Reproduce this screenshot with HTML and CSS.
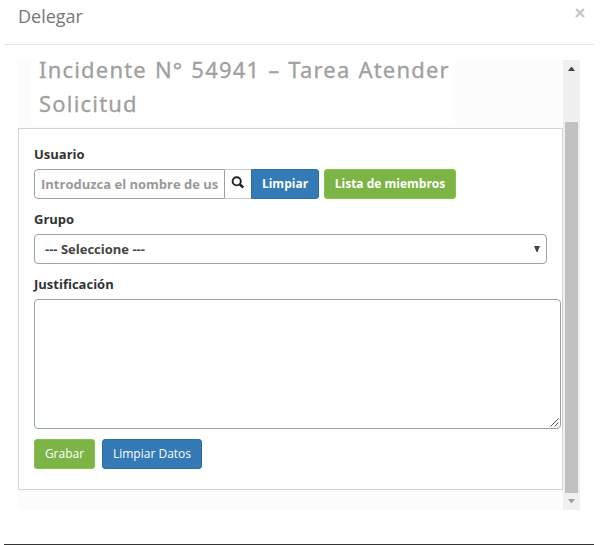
FILE: index.html
```html
<!DOCTYPE html>
<html lang="es">
<head>
<meta charset="utf-8">
<title>Delegar</title>
<link rel="stylesheet" href="styles.css">
</head>
<body>
<div class="modal">
  <header class="modal-header">
    <h4 class="modal-title">Delegar</h4>
    <button class="close" aria-label="Cerrar"><svg width="10" height="10" viewBox="0 0 10 10"><path d="M1 1l8 8M9 1L1 9"/></svg></button>
  </header>
  <div class="frame">
    <main class="content">
      <h1 class="heading"><span class="line line-first">Incidente N° 54941 – Tarea Atender</span><span class="line line-second">Solicitud</span></h1>
      <form class="panel">
        <label class="label">Usuario</label>
        <div class="user-row">
          <div class="control user-input">Introduzca el nombre de us</div>
          <button type="button" class="search" aria-label="Buscar"><svg width="14" height="14" viewBox="0 0 14 14"><circle cx="5.7" cy="5.3" r="4.1"/><path class="handle" d="M8.8 8.3l3.4 3.2"/></svg></button>
          <button type="button" class="btn blue strong joined">Limpiar</button>
          <button type="button" class="btn green strong members">Lista de miembros</button>
        </div>
        <label class="label">Grupo</label>
        <div class="control select"><span>--- Seleccione ---</span><svg width="6" height="6" viewBox="0 0 6 6"><path d="M0 0h6L3.5 6h-1z"/></svg></div>
        <label class="label">Justificación</label>
        <div class="control textarea"><svg width="9" height="9" viewBox="0 0 9 9"><path d="M.5 8.5l8-8M4.5 8.5l4-4"/></svg></div>
        <div class="actions">
          <button type="button" class="btn green save">Grabar</button>
          <button type="button" class="btn blue clear">Limpiar Datos</button>
        </div>
      </form>
    </main>
    <div class="scrollbar">
      <svg class="up" width="7" height="4" viewBox="0 0 7 4"><path d="M0 4h7L4 0H3z"/></svg>
      <div class="thumb"></div>
      <svg class="down" width="7" height="4" viewBox="0 0 7 4"><path d="M0 0h7L4 4H3z"/></svg>
    </div>
  </div>
</div>
</body>
</html>
```
FILE: styles.css
```css
* { box-sizing: border-box; }
body {
  margin: 0;
  background: #fff;
  color: #333;
  font: 13px/18px "Open Sans", sans-serif;
  overflow: hidden;
}
.modal {
  width: 590px;
  height: 545px;
  margin-left: 4px;
  border-bottom: 1px solid #333;
}
.modal-header {
  display: flex;
  justify-content: space-between;
  align-items: flex-start;
  height: 45px;
  padding: 4px 9px 0 14px;
  border-bottom: 1px solid #e2e2e2;
}
.modal-title {
  margin: 0;
  color: #777;
  font-size: 18px;
  font-weight: 400;
  line-height: 25px;
}
button { font-family: inherit; }
.close {
  display: flex;
  margin-top: 4px;
  padding: 0;
  border: 0;
  background: none;
}
.close path { stroke: #c4c4c4; stroke-width: 2.2; fill: none; }
.frame {
  display: flex;
  width: 562px;
  height: 450px;
  margin: 15px 0 0 14px;
  background: #fcfcfc;
}
.content { width: 545px; }
.heading {
  display: flow-root;
  width: 424px;
  height: 66px;
  margin: 0 0 2px 13px;
  padding-left: 8px;
  background: #fff;
  color: #a0a0a0;
  font: 400 22px/34px "Noto Sans", sans-serif;
  letter-spacing: 1.2px;
  white-space: nowrap;
  -webkit-text-stroke: .3px #a0a0a0;
}
.line { display: block; }
.line-first { margin-top: -8px; word-spacing: 1px; }
.panel {
  height: 362px;
  padding: 16px 1px 0 15px;
  background: #fff;
  border: 1px solid #d3d3d3;
}
.label {
  display: block;
  height: 18px;
  margin-bottom: 6px;
  font-weight: 700;
}
.control {
  border: 1px solid #95a5a0;
  border-radius: 4px;
  background: #fff;
}
.user-row { display: flex; height: 30px; margin-bottom: 11px; }
.user-input {
  width: 191px;
  padding: 0 6px;
  overflow: hidden;
  border-radius: 4px 0 0 4px;
  color: #999;
  font-weight: 700;
  line-height: 28px;
  white-space: nowrap;
}
.search {
  display: flex;
  width: 26px;
  padding: 6px 0 0 6px;
  border: solid #ccc;
  border-width: 1px 0;
  background: #fff;
}
.search svg { fill: none; stroke: #222; stroke-width: 1.9; }
.search .handle { stroke-width: 2.5; }
.btn {
  height: 30px;
  padding: 0;
  border: 1px solid;
  border-radius: 3px;
  color: #fff;
  font-size: 12px;
  line-height: 28px;
  white-space: nowrap;
}
.blue { background: #337ab7; border-color: #2e6da4; }
.green { background: #7cb445; border-color: #87c04b; }
.strong { font-weight: 700; }
.joined { width: 68px; border-radius: 0 3px 3px 0; }
.members { width: 132px; margin-left: 5px; }
.select {
  display: flex;
  align-items: center;
  justify-content: space-between;
  width: 513px;
  height: 30px;
  margin-bottom: 11px;
  padding: 0 6px 0 10px;
  color: #444;
  font-weight: 700;
}
.select svg { fill: #444; }
.textarea {
  display: flex;
  align-items: flex-end;
  justify-content: flex-end;
  width: 527px;
  height: 130px;
  padding: 1px;
}
.textarea svg { fill: none; stroke: #555; }
.actions { display: flex; gap: 7px; margin-top: 10px; }
.save { width: 61px; }
.clear { width: 100px; }
.scrollbar {
  display: flex;
  flex-direction: column;
  align-items: center;
  width: 17px;
  background: #f0f0f0;
}
.up { margin: 7px 0 51px; fill: #444; }
.down { margin-top: 6px; fill: #a0a0a0; }
.thumb { width: 13px; height: 371px; background: #c1c1c1; }
```
